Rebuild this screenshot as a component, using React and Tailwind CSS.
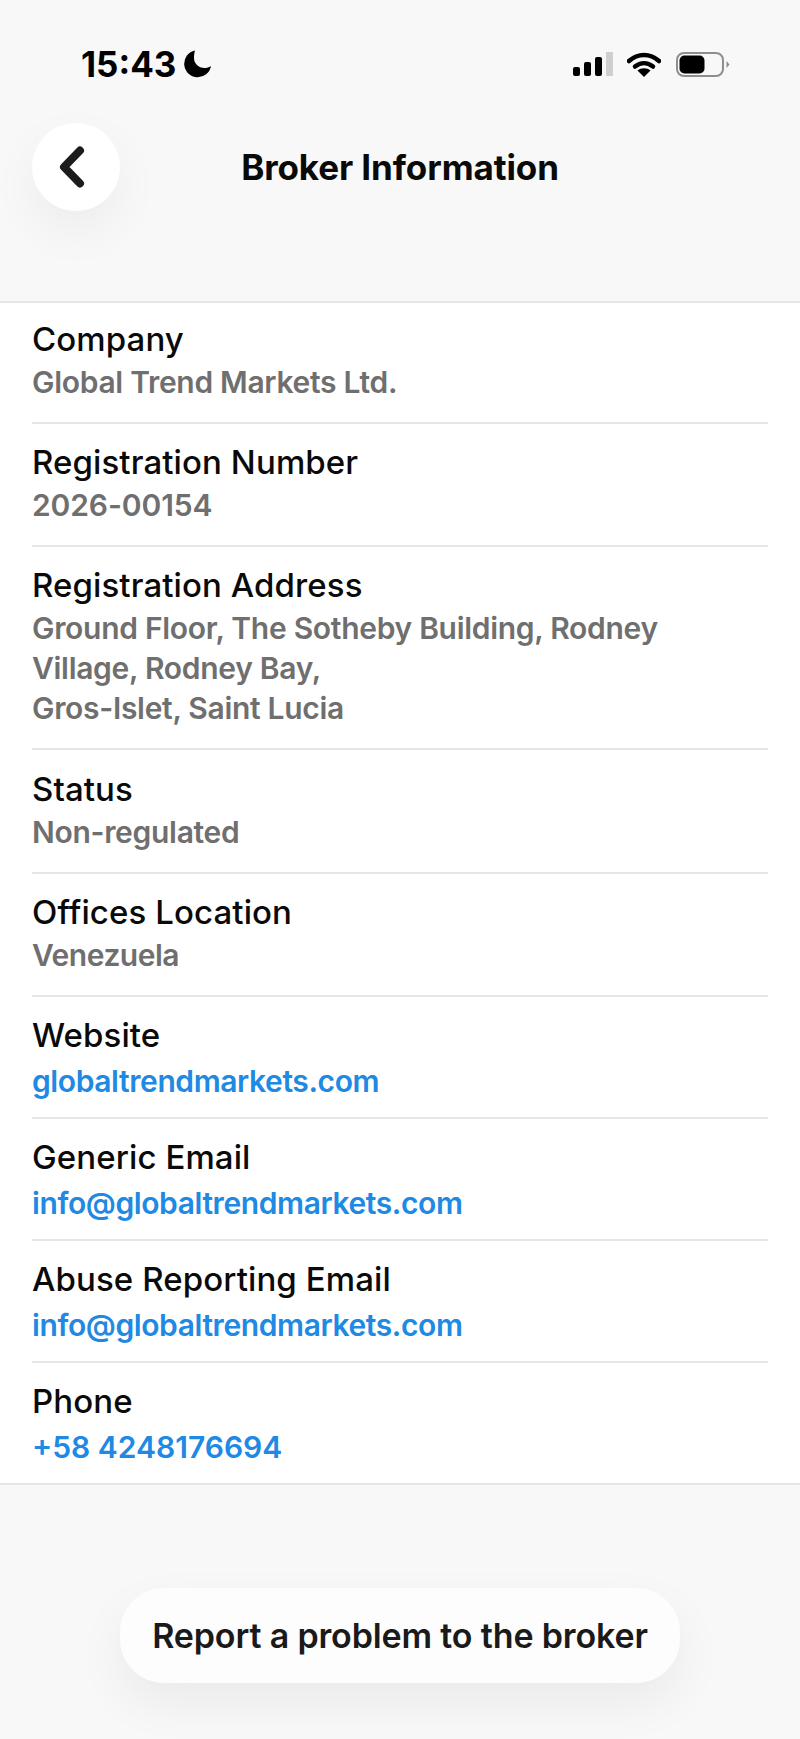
const rows = [
  { label: "Company", lines: ["Global Trend Markets Ltd."], pad: "pt-[13px]", track: "tracking-[-0.3px]" },
  { label: "Registration Number", lines: ["2026-00154"], pad: "pt-[15px]", track: "tracking-[-0.1px]" },
  { label: "Registration Address", lines: ["Ground Floor, The Sotheby Building, Rodney", "Village, Rodney Bay,", "Gros-Islet, Saint Lucia"], pad: "pt-[15px]", track: "tracking-[-0.3px]" },
  { label: "Status", lines: ["Non-regulated"], pad: "pt-[16px]", track: "tracking-[-0.3px]" },
  { label: "Offices Location", lines: ["Venezuela"], pad: "pt-[15px]", track: "tracking-[-0.5px]" },
];

const links = [
  { label: "Website", value: "globaltrendmarkets.com", track: "tracking-[-0.4px]" },
  { label: "Generic Email", value: "info@globaltrendmarkets.com", track: "tracking-[-0.4px]" },
  { label: "Abuse Reporting Email", value: "info@globaltrendmarkets.com", track: "tracking-[-0.4px]" },
  { label: "Phone", value: "+58 4248176694", track: "tracking-[0px]" },
];

function StatusIcons() {
  return (
    <div className="flex items-center">
      <svg width="40" height="24" viewBox="0 0 40 24" className="mr-[14px]">
        <rect x="0" y="15" width="7" height="9" rx="2" fill="#000" />
        <rect x="11" y="10" width="7" height="14" rx="2" fill="#000" />
        <rect x="22" y="5" width="7" height="19" rx="2" fill="#000" />
        <rect x="33" y="0" width="7" height="24" rx="1" fill="#cfcfcf" />
      </svg>
      <svg width="34" height="25" viewBox="0 0 34 25" className="mr-[15px]">
        <path d="M2 9 C11 1 23 1 32 9" fill="none" stroke="#000" strokeWidth="4.5" strokeLinecap="round" />
        <path d="M8 14.5 C13.5 10 20.5 10 26 14.5" fill="none" stroke="#000" strokeWidth="4.5" strokeLinecap="round" />
        <path d="M17 25 L10.5 18.5 C14 15.5 20 15.5 23.5 18.5 Z" fill="#000" />
      </svg>
      <svg width="54" height="25" viewBox="0 0 54 25">
        <rect x="1" y="1" width="46" height="23" rx="7" fill="none" stroke="#8e8e8e" strokeWidth="2" />
        <rect x="3.5" y="3.5" width="25" height="18" rx="5" fill="#000" />
        <path d="M50.5 9 L53.5 12.5 L50.5 16 Z" fill="#8e8e8e" />
      </svg>
    </div>
  );
}

export default function App() {
  return (
    <div className="flex min-h-[1739px] w-full flex-col bg-[#f8f8f8] font-['Inter',sans-serif] text-[#0a0a0a]">
      <div className="h-[303px] shrink-0 border-b-2 border-[#e6e6e6]">
        <div className="flex items-center justify-between pl-[81px] pr-[70px] pt-[44px]">
          <div className="flex items-center">
            <span className="text-[35px] font-bold leading-[40px] text-black">15:43</span>
            <svg width="28" height="28" viewBox="0 0 28 28" className="ml-[8px]">
              <path d="M11 0.5 A13.5 13.500 0 1 0 27 16 C25 17.500 22.500 18 20.500 18 C14.500 18 10 13.500 10 8 C10 5 10.300 3 11 0.500 Z" fill="#000" />
            </svg>
          </div>
          <StatusIcons />
        </div>
        <div className="relative mt-[39px] flex h-[88px] items-center justify-center">
          <button className="absolute left-[32px] top-0 flex h-[88px] w-[88px] items-center justify-center rounded-full bg-white shadow-[0_20px_50px_rgba(0,0,0,0.05)]">
            <svg width="32" height="44" viewBox="0 0 32 44" className="mr-[10px]">
              <path d="M25 5.500 L9 22 L25 38.500" fill="none" stroke="#1c1c1c" strokeWidth="8" strokeLinecap="round" strokeLinejoin="round" />
            </svg>
          </button>
          <h1 className="text-[35px] font-bold leading-[40px] tracking-[-0.1px]">Broker Information</h1>
        </div>
      </div>

      <div className="border-b-2 border-[#e6e6e6] bg-white pl-[32px]">
        {rows.map((row) => (
          <div key={row.label} className={`mr-[32px] border-b-2 border-[#e6e6e6] pb-[20px] ${row.pad}`}>
            <p className="text-[33px] font-medium leading-[46px] tracking-[0.1px]">{row.label}</p>
            {row.lines.map((line) => (
              <p key={line} className={`text-[30px] font-semibold leading-[40px] text-[#6f6f6f] ${row.track}`}>{line}</p>
            ))}
          </div>
        ))}
        {links.map((row, i) => (
          <div key={row.label} className={`mr-[32px] pt-[16px] pb-[14px] ${i < links.length - 1 ? "border-b-2 border-[#e6e6e6]" : ""}`}>
            <p className="text-[33px] font-medium leading-[44px] tracking-[0.1px]">{row.label}</p>
            <p className={`mt-[2px] text-[30px] font-semibold leading-[44px] text-[#2089e3] ${row.track}`}>{row.value}</p>
          </div>
        ))}
      </div>

      <div className="flex justify-center pt-[103px]">
        <button className="flex h-[95px] w-[560px] items-center justify-center rounded-[44px] bg-[#fdfdfd] text-[34px] font-semibold tracking-[-0.15px] text-[#1a1a1a] shadow-[0_20px_50px_rgba(0,0,0,0.06)]">
          Report a problem to the broker
        </button>
      </div>
    </div>
  );
}
